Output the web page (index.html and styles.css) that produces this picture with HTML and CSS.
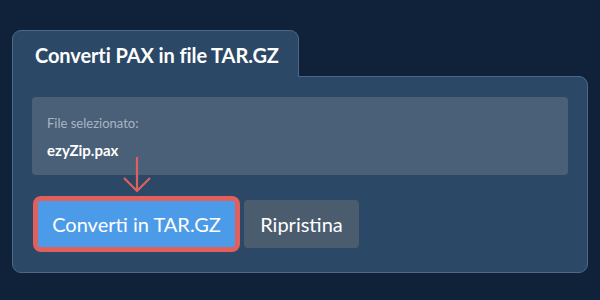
FILE: index.html
```html
<!DOCTYPE html>
<html lang="it">
<head>
    <meta charset="UTF-8">
    <meta name="viewport" content="width=device-width, initial-scale=1.0">
    <title>Converti PAX in file TAR.GZ</title>
    <link rel="stylesheet" href="styles.css">
</head>
<body>
    <div class="converter">
        <div class="tab">Converti PAX in file TAR.GZ</div>
        <div class="panel">
            <div class="file-box">
                <div class="file-label">File selezionato:</div>
                <div class="file-name">ezyZip.pax</div>
            </div>
            <div class="actions">
                <div class="highlight">
                    <svg class="arrow" width="28" height="36" viewBox="0 0 28 36">
                        <path d="M14 0 V34 M1 21 L14 34 L27 21" fill="none" stroke="#e0605e" stroke-width="2.2"/>
                    </svg>
                    <button class="btn btn-primary">Converti in TAR.GZ</button>
                </div>
                <button class="btn btn-secondary">Ripristina</button>
            </div>
        </div>
    </div>
</body>
</html>
```

FILE: styles.css
```css
* {
    margin: 0;
    padding: 0;
    box-sizing: border-box;
    font-family: 'Lato', 'Open Sans', sans-serif;
}

body {
    background: #10223a;
    padding: 30px 12px 0 12px;
    width: 600px;
    height: 300px;
    overflow: hidden;
}

.converter {
    width: 576px;
}

.tab {
    position: relative;
    z-index: 1;
    display: inline-block;
    width: 287px;
    height: 47px;
    margin-bottom: -1px;
    padding: 12px 0 0 22px;
    background: #2c4867;
    border: 1px solid #4d6888;
    border-bottom: none;
    border-radius: 9px 9px 0 0;
    color: #ffffff;
    font-size: 20px;
    font-weight: bold;
    letter-spacing: -0.1px;
}

.panel {
    background: #2c4867;
    border: 1px solid #4d6888;
    border-radius: 0 9px 9px 9px;
    padding: 20px 19px 20px 19px;
    height: 197px;
}

.file-box {
    background: #4a6078;
    border-radius: 4px;
    height: 78px;
    padding: 16px 15px 0 15px;
}

.file-label {
    color: #a9b5c3;
    font-size: 13px;
    line-height: 20px;
}

.file-name {
    margin-top: 7px;
    color: #ffffff;
    font-size: 15px;
    font-weight: bold;
    line-height: 20px;
}

.actions {
    display: flex;
    align-items: center;
    gap: 8px;
    margin-top: 25px;
    padding-left: 5px;
}

.highlight {
    position: relative;
    display: flex;
}

.arrow {
    position: absolute;
    left: 50%;
    bottom: 100%;
    margin-left: -14px;
    margin-bottom: 7px;
}

.btn {
    height: 48px;
    border: none;
    border-radius: 4px;
    color: #ffffff;
    font-size: 20px;
    padding: 0;
    cursor: pointer;
}

.btn-primary {
    width: 199px;
    background: #4c9be8;
    box-shadow: 0 0 0 4px #e0605e, inset 0 0 0 1px #e0605e;
}

.btn-secondary {
    width: 115px;
    background: #4b5c6e;
}
```
